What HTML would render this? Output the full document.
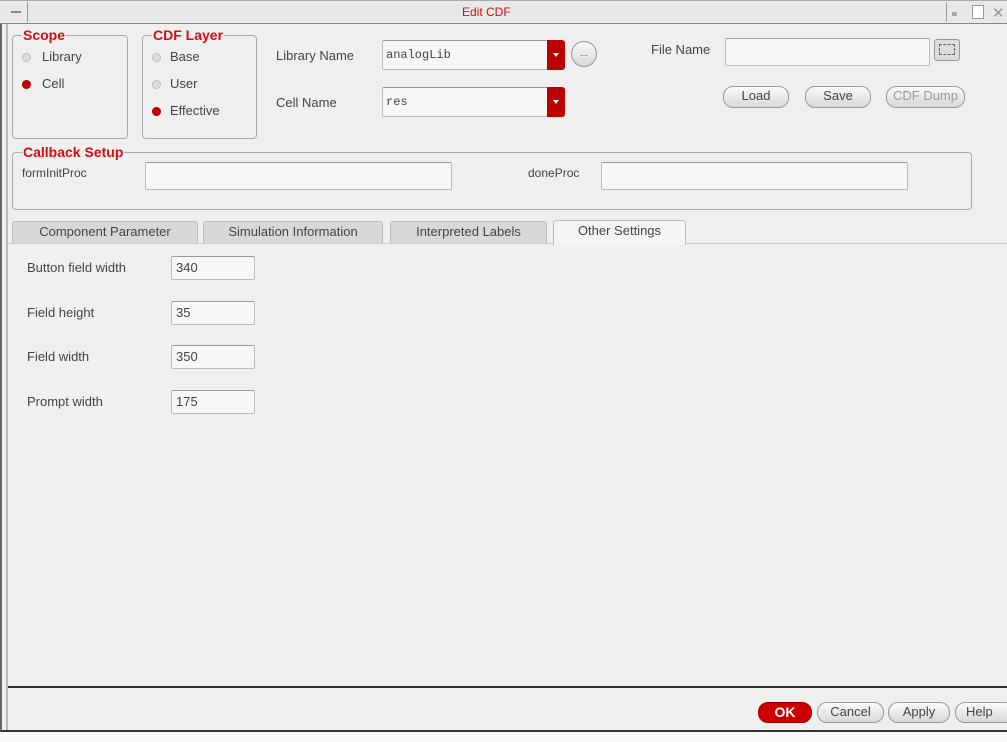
<!DOCTYPE html>
<html><head><style>
*{margin:0;padding:0;box-sizing:border-box}
body{width:1007px;height:742px;background:#fafafa;position:relative;overflow:hidden;font-family:"Liberation Sans",sans-serif;font-size:13px;color:#444}
.a{position:absolute}
.win{left:0;top:0;width:1007px;height:732px;background:#efefef;border-left:2px solid #666;border-bottom:2px solid #333}
.title{left:0;top:0;width:1007px;height:24px;background:#e8e8e8;border-bottom:1px solid #888;border-top:1px solid #aaa}
.grp{border:1px solid #aaa;border-radius:4px}
.lg{color:#d01010;font-weight:bold;font-size:14px;background:#efefef;padding:0 1px}
.field{background:#f7f7f7;border:1px solid #bbb;border-top-color:#999;border-radius:2px}
.rad{width:9px;height:9px;border-radius:50%;background:#ddd;border:1px solid #bbb}
.rad.on{background:#c00;border-color:#900}
.btn{border:1px solid #999;border-radius:10px;background:linear-gradient(#fafafa,#d8d8d8);text-align:center;font-size:13px;line-height:18px;color:#444}
.tab{border:1px solid #bbb;border-bottom:none;border-radius:3px 3px 0 0;background:#d8d8d8;text-align:center;line-height:20px;color:#444}
.dd{width:18px;background:#b00;border-radius:0 3px 3px 0}
.dd:after{content:"";position:absolute;left:6px;top:13px;border:3px solid transparent;border-top:4px solid #fff}
.mono{font-family:"Liberation Mono",monospace;font-size:12px}
</style></head><body>
<div class="a win"></div>
<div class="a title"></div>
<div class="a" style="left:4px;top:2px;width:24px;height:20px;border-right:1px solid #999"><div class="a" style="left:7px;top:9px;width:10px;height:2px;background:#888"></div></div>
<div class="a" style="left:462px;top:5px;color:#d01010;font-size:12px">Edit CDF</div>
<div class="a" style="left:946px;top:2px;width:20px;height:20px;border-left:1px solid #999"></div>
<div class="a" style="left:952px;top:12px;width:5px;height:4px;background:#aaa"></div>
<div class="a" style="left:972px;top:5px;width:12px;height:14px;border:1px solid #999;background:#fff"></div>
<div class="a" style="left:992px;top:4px;color:#999;font-size:15px">✕</div>

<div class="a grp" style="left:12px;top:35px;width:116px;height:104px"></div>
<div class="a lg" style="left:22px;top:27px">Scope</div>
<div class="a rad" style="left:22px;top:53px"></div><div class="a" style="left:42px;top:49px">Library</div>
<div class="a rad on" style="left:22px;top:80px"></div><div class="a" style="left:42px;top:76px">Cell</div>

<div class="a grp" style="left:123px;top:35px;width:134px;height:104px;left:142px;width:115px"></div>
<div class="a lg" style="left:152px;top:27px">CDF Layer</div>
<div class="a rad" style="left:152px;top:53px"></div><div class="a" style="left:170px;top:49px">Base</div>
<div class="a rad" style="left:152px;top:80px"></div><div class="a" style="left:170px;top:76px">User</div>
<div class="a rad on" style="left:152px;top:107px"></div><div class="a" style="left:170px;top:103px">Effective</div>

<div class="a" style="left:276px;top:48px">Library Name</div>
<div class="a field mono" style="left:382px;top:40px;width:166px;height:30px;padding:7px 3px">analogLib</div>
<div class="a dd" style="left:547px;top:40px;height:30px"></div>
<div class="a btn" style="left:571px;top:41px;width:26px;height:26px;border-radius:50%;font-size:9px;line-height:22px">...</div>
<div class="a" style="left:276px;top:95px">Cell Name</div>
<div class="a field mono" style="left:382px;top:87px;width:166px;height:30px;padding:7px 3px">res</div>
<div class="a dd" style="left:547px;top:87px;height:30px"></div>

<div class="a" style="left:651px;top:42px">File Name</div>
<div class="a field" style="left:725px;top:38px;width:205px;height:28px"></div>
<div class="a" style="left:934px;top:39px;width:26px;height:22px;border:1px solid #999;border-radius:3px;background:#ddd"><div class="a" style="left:4px;top:4px;width:16px;height:11px;border:1px dashed #666"></div></div>
<div class="a btn" style="left:723px;top:86px;width:66px;height:22px">Load</div>
<div class="a btn" style="left:805px;top:86px;width:66px;height:22px">Save</div>
<div class="a btn" style="left:886px;top:86px;width:79px;height:22px;color:#999">CDF Dump</div>

<div class="a grp" style="left:12px;top:152px;width:960px;height:58px"></div>
<div class="a lg" style="left:22px;top:144px">Callback Setup</div>
<div class="a" style="left:22px;top:166px;font-size:12px">formInitProc</div>
<div class="a field" style="left:145px;top:162px;width:307px;height:28px"></div>
<div class="a" style="left:528px;top:166px;font-size:12px">doneProc</div>
<div class="a field" style="left:601px;top:162px;width:307px;height:28px"></div>

<div class="a" style="left:8px;top:243px;width:999px;height:445px;background:#f0f0f0;border-top:1px solid #ccc;border-bottom:2px solid #333"></div>
<div class="a tab" style="left:12px;top:221px;width:186px;height:22px">Component Parameter</div>
<div class="a tab" style="left:203px;top:221px;width:180px;height:22px">Simulation Information</div>
<div class="a tab" style="left:390px;top:221px;width:157px;height:22px">Interpreted Labels</div>
<div class="a tab" style="left:553px;top:220px;width:133px;height:25px;background:#f4f4f4">Other Settings</div>

<div class="a" style="left:27px;top:260px">Button field width</div>
<div class="a field" style="left:171px;top:256px;width:84px;height:24px;padding:3px 4px">340</div>
<div class="a" style="left:27px;top:305px">Field height</div>
<div class="a field" style="left:171px;top:301px;width:84px;height:24px;padding:3px 4px">35</div>
<div class="a" style="left:27px;top:349px">Field width</div>
<div class="a field" style="left:171px;top:345px;width:84px;height:24px;padding:3px 4px">350</div>
<div class="a" style="left:27px;top:394px">Prompt width</div>
<div class="a field" style="left:171px;top:390px;width:84px;height:24px;padding:3px 4px">175</div>

<div class="a" style="left:6px;top:24px;width:2px;height:706px;background:#bbb"></div>

<div class="a btn" style="left:758px;top:702px;width:54px;height:21px;background:#c00;border-color:#900;color:#fff;font-weight:bold;font-size:14px">OK</div>
<div class="a btn" style="left:817px;top:702px;width:67px;height:21px">Cancel</div>
<div class="a btn" style="left:888px;top:702px;width:62px;height:21px">Apply</div>
<div class="a btn" style="left:955px;top:702px;width:60px;height:21px;text-align:left;padding-left:10px">Help</div>
</body></html>
